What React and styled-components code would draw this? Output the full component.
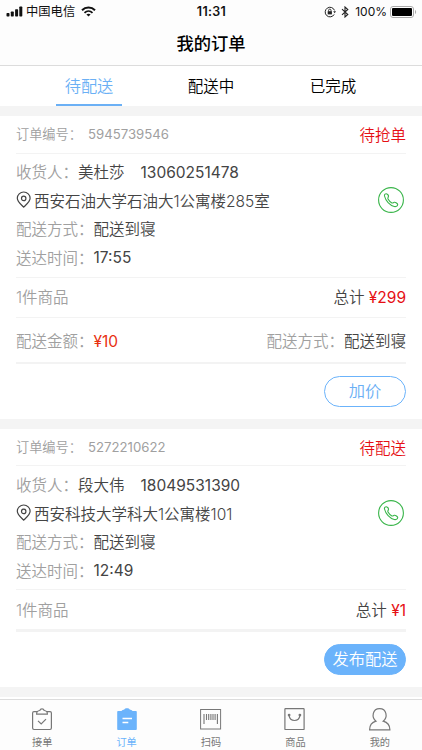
import React, { useState } from 'react';
import styled, { createGlobalStyle, css } from 'styled-components';

const GlobalStyle = createGlobalStyle`
  * {
    box-sizing: border-box;
  }

  body {
    margin: 0;
    background-color: #f4f4f4;
    font-family: Inter, 'Noto Sans CJK SC', sans-serif;
    font-weight: 350;
  }

  button {
    padding: 0;
    border: 0;
    background: none;
    font: inherit;
  }
`;

const Screen = styled.div`
  width: 422px;
  height: 750px;
  display: flex;
  flex-direction: column;
  overflow: hidden;
  background-color: #f4f4f4;
`;

const StatusBar = styled.div`
  height: 22px;
  flex-shrink: 0;
  display: grid;
  grid-template-columns: 1fr auto 1fr;
  align-items: center;
  padding: 0 5px 0 6px;
  background-color: #fdfdfd;
  color: #111;
  font-size: 12px;
  font-weight: 400;
  line-height: 22px;
`;

const StatusGroup = styled.div`
  display: flex;
  align-items: center;
  gap: ${props => (props.$end ? 5 : 0)}px;
  justify-content: ${props => (props.$end ? 'flex-end' : 'flex-start')};
`;

const Carrier = styled.span`
  margin: 0 6px 0 3px;
  font-size: 12.3px;
`;

const Clock = styled.span`
  padding-top: 1px;
  font-weight: 600;
  font-size: 12.5px;
  letter-spacing: 0.3px;
`;

const BatteryText = styled.span`
  margin: 0 -2px 0 1px;
  font-size: 12px;
`;

const NavBar = styled.header`
  height: 44px;
  flex-shrink: 0;
  display: flex;
  align-items: center;
  justify-content: center;
  padding-bottom: 2px;
  background-color: #fdfdfd;
  border-bottom: 1px solid #dcdcdc;
  color: #000;
  font-size: 17.3px;
  font-weight: 500;
`;

const Tabs = styled.nav`
  height: 40px;
  flex-shrink: 0;
  display: flex;
  justify-content: center;
  background-color: #fff;
`;

const TabItem = styled.button`
  width: 122px;
  display: flex;
  justify-content: center;
  color: #000;
  font-size: 15.5px;
  line-height: 41px;

  span {
    width: 66px;
    text-align: center;
  }

  ${props =>
    props.$active &&
    css`
      color: #6bb0f5;
      font-size: 16.2px;
      line-height: 40px;

      span {
        border-bottom: 2px solid #6bb0f5;
      }
    `}
`;

const OrderList = styled.main`
  flex: 1;
  min-height: 0;
  display: flex;
  flex-direction: column;
  gap: 10px;
  padding-top: 10px;
  overflow: hidden;
`;

const Card = styled.section`
  flex-shrink: 0;
  padding: 0 16px;
  background-color: #fff;
  color: #444;
  font-size: 15.5px;
`;

const Row = styled.div`
  height: ${props => props.$height}px;
  display: flex;
  align-items: center;
  justify-content: space-between;
  padding-bottom: ${props => props.$lift || 0}px;
  border-bottom: ${props => props.$line || 1}px solid #f3f3f3;
`;

const OrderNo = styled.span`
  color: #a0a0a0;
  font-size: 13.2px;
`;

const Digits = styled.span`
  margin-left: ${props => props.$gap || 0}px;
  padding-top: 2px;
  font-weight: 400;
`;

const Status = styled.span`
  color: #e60f14;
`;

const Label = styled.span`
  color: #a0a0a0;
`;

const Price = styled.span`
  color: ${props => (props.$orange ? '#e83010' : '#e60f14')};
  font-weight: 400;
`;

const Details = styled.div`
  height: 124px;
  display: flex;
  align-items: center;
  justify-content: space-between;
  padding: ${props => (props.$low ? '4px 2px 5px 0' : '3px 2px 6px 0')};
  border-bottom: 1px solid #f3f3f3;
`;

const Line = styled.div`
  height: 28.5px;
  display: flex;
  align-items: center;
  white-space: nowrap;
`;

const CallButton = styled.button`
  width: 26px;
  height: 26px;
  margin-bottom: 29px;
`;

const Actions = styled.div`
  height: 55px;
  display: flex;
  align-items: center;
  justify-content: flex-end;
`;

const PillButton = styled.button`
  width: 82px;
  height: 31px;
  border: 1px solid #6bb3fb;
  border-radius: 16px;
  background-color: ${props => (props.$filled ? '#6bb3fb' : '#fff')};
  color: ${props => (props.$filled ? '#fff' : '#6bb0f5')};
  font-size: 16.3px;
  line-height: 29px;
`;

const BottomBar = styled.nav`
  height: 53px;
  flex-shrink: 0;
  display: flex;
  border-top: 2px solid #fff;
  background-color: #fdfdfd;
`;

const BottomItem = styled.button`
  flex: 1;
  display: flex;
  flex-direction: column;
  align-items: center;
  padding: 8px 0 0 0;
  border-top: 1px solid #dcdcdc;
  color: ${props => (props.$active ? '#6bb3fb' : '#777')};
  font-size: 10.2px;
  font-weight: 400;
  line-height: 15px;

  svg {
    margin-bottom: 4px;
  }
`;

const SignalIcon = () => (
  <svg width="17" height="12" viewBox="0 0 17 12" fill="#111">
    <rect x="0.5" y="7" width="3" height="3.5" rx="0.7" />
    <rect x="4.8" y="5.5" width="3" height="5" rx="0.7" />
    <rect x="9.1" y="3.2" width="3" height="7.3" rx="0.7" />
    <rect x="13.3" y="0.5" width="3" height="10" rx="0.7" />
  </svg>
);

const WifiIcon = () => (
  <svg width="15" height="11" viewBox="0 0 15 11" fill="none" stroke="#111">
    <path d="M1 4.2 C4.6 0.6 10.4 0.6 14 4.2" strokeWidth="2" />
    <path d="M3.5 6.8 C5.8 4.6 9.2 4.6 11.5 6.8" strokeWidth="1.8" />
    <path d="M7.5 10.6 L5.4 8.5 C6.6 7.5 8.4 7.5 9.6 8.5 Z" fill="#111" stroke="none" />
  </svg>
);

const LockIcon = () => (
  <svg width="12" height="12" viewBox="0 0 12 12" fill="none" stroke="#222">
    <path d="M10.2 8.4 A4.8 4.8 0 1 1 10.5 4.4" />
    <path d="M9.2 5.2 H12 L10.6 7.2 Z" fill="#222" stroke="none" />
    <rect x="3.7" y="5.2" width="4.2" height="3.2" fill="#222" stroke="none" />
    <path d="M4.6 5.4 V4.3 A1.2 1.2 0 0 1 7 4.3 V5.4" strokeWidth="0.9" />
  </svg>
);

const BluetoothIcon = () => (
  <svg width="8" height="12" viewBox="0 0 8 12" fill="none" stroke="#222" strokeWidth="1.1">
    <path d="M1 3.2 L6.8 8.5 L4 11 V1 L6.8 3.5 L1 8.8" />
  </svg>
);

const BatteryIcon = () => (
  <svg width="27" height="12" viewBox="0 0 27 12">
    <rect x="0.5" y="0.5" width="23" height="11" rx="2.5" fill="#fff" stroke="#aaa" />
    <rect x="2" y="2" width="20" height="8" rx="1" fill="#000" />
    <path d="M25 4 C26.5 4.6 26.5 7.4 25 8 Z" fill="#aaa" />
  </svg>
);

const PinIcon = () => (
  <svg width="18" height="18" viewBox="0 0 18 18" fill="none" stroke="#444" strokeWidth="1.2">
    <path d="M7.7 16.2 C4.6 13 1.3 10.5 1.3 7.2 A6.4 6.2 0 0 1 14.1 7.2 C14.1 10.5 10.8 13 7.7 16.2 Z" />
    <circle cx="7.7" cy="7.4" r="2.2" />
  </svg>
);

const PhoneIcon = () => (
  <svg width="26" height="26" viewBox="0 0 26 26" fill="none" stroke="#39b54a" strokeWidth="1.1">
    <circle cx="13" cy="13" r="12.4" />
    <path d="M6.5 9 C6.1 7.4 7.6 6.4 8.9 6.9 C10 7.4 10.7 8.9 10.3 10 C10 10.8 9.5 11.2 10 12 C11 13.8 12.2 15 13.9 15.9 C14.8 16.4 15.2 15.6 16.2 15.3 C17.5 15 19.8 16.6 19.7 17.7 C19.5 19.3 17.7 19.9 16.2 19.5 C11.8 18.2 7.6 13.9 6.5 9 Z" />
  </svg>
);

const TaskIcon = () => (
  <svg width="22" height="23" viewBox="0 0 22 23" fill="none" stroke="#777" strokeWidth="1.2">
    <path d="M6 3.6 H3 Q1.6 3.6 1.6 5 V20.1 Q1.6 21.5 3 21.5 H19 Q20.4 21.5 20.4 20.1 V5 Q20.4 3.6 19 3.6 H16" />
    <path d="M5.6 6.2 C5.5 3.6 6.3 2.7 8.8 2.5 C9.5 0.2 12.5 0.2 13.2 2.5 C15.7 2.7 16.5 3.6 16.4 6.2 Z" />
    <path d="M7 12.8 L10.2 16 L15 11.2" />
  </svg>
);

const OrderIcon = () => (
  <svg width="22" height="23" viewBox="0 0 22 23">
    <path
      d="M2 3 H5.5 C6.3 2 7.5 1.8 8.3 1.6 C8.8 -0.3 13.2 -0.3 13.7 1.6 C14.5 1.8 15.7 2 16.5 3 H20 Q20.8 3 20.8 3.9 V21.1 Q20.8 22 20 22 H2 Q1.2 22 1.2 21.1 V3.9 Q1.2 3 2 3 Z"
      fill="#6bb3fb"
    />
    <path d="M6.5 10.5 H16 M6.5 14.5 H12.3" stroke="#fff" strokeWidth="1.3" />
  </svg>
);

const ScanIcon = () => (
  <svg width="22" height="23" viewBox="0 0 22 23" fill="none" stroke="#777">
    <rect x="0.6" y="1.5" width="20" height="19.5" />
    <path d="M4 6 V16 M6.5 6 V12 M8.7 6 V12 M10.9 6 V12 M13 6 V12 M15.1 6 V12 M17.4 6 V16" strokeWidth="1.1" />
  </svg>
);

const GoodsIcon = () => (
  <svg width="22" height="23" viewBox="0 0 22 23" fill="none" stroke="#777" strokeWidth="1.2">
    <rect x="0.9" y="0.7" width="19.2" height="20.8" rx="0.6" />
    <path d="M5.1 7.7 C6 14.1 15 14.1 15.9 7.7" />
    <circle cx="5.1" cy="7.1" r="0.8" fill="#777" />
    <circle cx="15.9" cy="7.1" r="0.8" fill="#777" />
  </svg>
);

const UserIcon = () => (
  <svg width="22" height="23" viewBox="0 0 22 23" fill="none" stroke="#777" strokeWidth="1.2">
    <path d="M7 13.2 C2.1 9 3.6 0.6 10.6 0.6 C17.6 0.6 19.1 9 14.2 13.2 C18.4 14.4 20.9 17.6 20.9 21.8 H0.6 C0.6 17.6 2.8 14.4 7 13.2 Z" />
  </svg>
);

const tabs = ['待配送', '配送中', '已完成'];

const orders = [
  {
    no: '5945739546',
    status: '待抢单',
    name: '美杜莎',
    phone: '13060251478',
    address: '西安石油大学石油大1公寓楼285室',
    time: '17:55',
    total: '¥299',
    fee: '¥10',
    action: '加价',
  },
  {
    no: '5272210622',
    status: '待配送',
    name: '段大伟',
    phone: '18049531390',
    address: '西安科技大学科大1公寓楼101',
    time: '12:49',
    total: '¥1',
    action: '发布配送',
  },
];

const menu = [
  { label: '接单', Icon: TaskIcon },
  { label: '订单', Icon: OrderIcon },
  { label: '扫码', Icon: ScanIcon },
  { label: '商品', Icon: GoodsIcon },
  { label: '我的', Icon: UserIcon },
];

const Order = ({ order }) => (
  <Card>
    <Row $height={order.fee ? 38 : 37} $lift={order.fee ? 2 : 1}>
      <OrderNo>
        订单编号：<Digits $gap={6}>{order.no}</Digits>
      </OrderNo>
      <Status>{order.status}</Status>
    </Row>
    <Details $low={!order.fee}>
      <div>
        <Line>
          <Label>收货人：</Label>
          {order.name}
          <Digits $gap={16}>{order.phone}</Digits>
        </Line>
        <Line>
          <PinIcon />
          {order.address}
        </Line>
        <Line>
          <Label>配送方式：</Label>
          配送到寝
        </Line>
        <Line>
          <Label>送达时间：</Label>
          <Digits>{order.time}</Digits>
        </Line>
      </div>
      <CallButton aria-label="call">
        <PhoneIcon />
      </CallButton>
    </Details>
    <Row $height={order.fee ? 40 : 42} $line={order.fee ? 1 : 3} $lift={order.fee ? 3 : 2}>
      <Label>1件商品</Label>
      <span>
        总计 <Price>{order.total}</Price>
      </span>
    </Row>
    {order.fee && (
      <Row $height={46} $line={2}>
        <span>
          <Label>配送金额：</Label>
          <Price $orange>{order.fee}</Price>
        </span>
        <span>
          <Label>配送方式：</Label>
          配送到寝
        </span>
      </Row>
    )}
    <Actions>
      <PillButton $filled={!order.fee}>{order.action}</PillButton>
    </Actions>
  </Card>
);

const App = () => {
  const [tab, setTab] = useState(0);
  const [page, setPage] = useState(1);

  return (
    <Screen>
      <GlobalStyle />
      <StatusBar>
        <StatusGroup>
          <SignalIcon />
          <Carrier>中国电信</Carrier>
          <WifiIcon />
        </StatusGroup>
        <Clock>11:31</Clock>
        <StatusGroup $end>
          <LockIcon />
          <BluetoothIcon />
          <BatteryText>100%</BatteryText>
          <BatteryIcon />
        </StatusGroup>
      </StatusBar>
      <NavBar>我的订单</NavBar>
      <Tabs>
        {tabs.map((name, i) => (
          <TabItem key={name} $active={tab === i} onClick={() => setTab(i)}>
            <span>{name}</span>
          </TabItem>
        ))}
      </Tabs>
      <OrderList>
        {orders.map(order => (
          <Order key={order.no} order={order} />
        ))}
      </OrderList>
      <BottomBar>
        {menu.map(({ label, Icon }, i) => (
          <BottomItem key={label} $active={page === i} onClick={() => setPage(i)}>
            <Icon />
            {label}
          </BottomItem>
        ))}
      </BottomBar>
    </Screen>
  );
};

export default App;
